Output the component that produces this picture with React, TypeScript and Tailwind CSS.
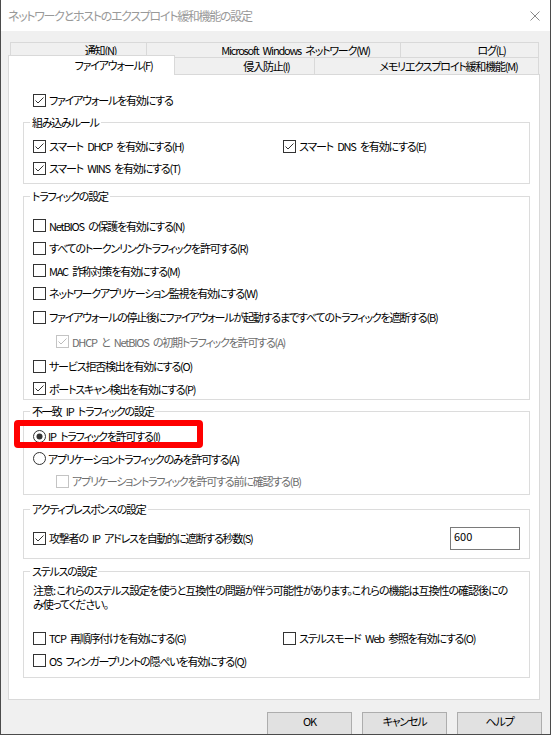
import type { ReactNode } from 'react';

const FONT = "font-['Noto_Sans_CJK_JP',sans-serif] [font-feature-settings:'palt'] [word-spacing:3px]";

function Box({ checked = false, disabled = false }: { checked?: boolean; disabled?: boolean }) {
  const stroke = disabled ? '#c4c4c4' : '#333333';
  return (
    <svg width="13" height="13" viewBox="0 0 13 13" className="shrink-0">
      <rect x="0.5" y="0.5" width="12" height="12" fill="#ffffff" stroke={stroke} />
      {checked && <path d="M2.5 6.5 L5 9 L10.5 3.5" fill="none" stroke={disabled ? '#bcbcbc' : '#333333'} />}
    </svg>
  );
}

function Radio({ selected = false }: { selected?: boolean }) {
  return (
    <svg width="13" height="13" viewBox="0 0 13 13" className="shrink-0">
      <circle cx="6.5" cy="6.5" r="6" fill="#ffffff" stroke="#333333" />
      {selected && <circle cx="6.5" cy="6.5" r="3" fill="#333333" />}
    </svg>
  );
}

function Check({ label, checked, disabled, className = '' }: { label: string; checked?: boolean; disabled?: boolean; className?: string }) {
  return (
    <div className={`flex items-center gap-[3px] whitespace-nowrap ${className}`}>
      <Box checked={checked} disabled={disabled} />
      <span className={disabled ? 'text-[#6d6d6d]' : 'text-black'}>{label}</span>
    </div>
  );
}

function Group({ title, className = '', children }: { title: string; className?: string; children: ReactNode }) {
  return (
    <fieldset className={`ml-[14px] w-[507px] border border-[#dcdcdc] px-[9px] ${className}`}>
      <legend className="-ml-[3px] px-[2px] leading-[14px]">{title}</legend>
      {children}
    </fieldset>
  );
}

function Tab({ label, className = '' }: { label: string; className?: string }) {
  return (
    <div className={`flex items-center justify-center whitespace-nowrap border border-b-0 border-[#d9d9d9] bg-[#f0f0f0] pl-[44px] ${className}`}>
      {label}
    </div>
  );
}

export default function App() {
  return (
    <div className={`flex h-[735px] w-[551px] flex-col overflow-hidden border-x border-b border-[#4b4b4b] bg-[#f0f0f0] text-[11px] leading-[14px] tracking-[-1.2px] text-black ${FONT}`}>
      {/* title bar */}
      <div className="flex h-[31px] shrink-0 items-center justify-between bg-white pl-[7px] pr-[10px]">
        <span className="text-[12px] tracking-[-1.3px] text-[#999999]">ネットワークとホストのエクスプロイト緩和機能の設定</span>
        <svg width="10" height="10" viewBox="0 0 10 10">
          <path d="M0.5 0.5 L9.5 9.5 M9.5 0.5 L0.5 9.5" stroke="#8a8a8a" strokeWidth="1" />
        </svg>
      </div>

      {/* tabs */}
      <div className="ml-[9px] mt-[11px] flex h-[16px]">
        <Tab label="通知(N)" className="w-[137px]" />
        <Tab label="Microsoft Windows ネットワーク(W)" className="-ml-px w-[255px]" />
        <Tab label="ログ(L)" className="-ml-px w-[139px]" />
      </div>
      <div className="ml-[7px] flex h-[17px] items-start">
        <div className="relative z-10 -mt-[2px] flex h-[20px] w-[167px] items-center justify-center whitespace-nowrap border border-b-0 border-[#d9d9d9] bg-white pb-[2px] pl-[44px]">
          ファイアウォール(F)
        </div>
        <Tab label="侵入防止(I)" className="-ml-px h-[17px] w-[141px]" />
        <Tab label="メモリエクスプロイト緩和機能(M)" className="-ml-px h-[17px] w-[225px]" />
      </div>

      {/* panel */}
      <div className="ml-[7px] h-[626px] w-[532px] shrink-0 border border-[#d9d9d9] bg-white pt-[15px]">
        <Check label="ファイアウォールを有効にする" checked className="ml-[24px] h-[20px]" />

        <Group title="組み込みルール" className="mt-[5px] pb-[4px] pt-[6px]">
          <div className="flex h-[22px] items-center">
            <Check label="スマート DHCP を有効にする(H)" checked className="w-[250px]" />
            <Check label="スマート DNS を有効にする(E)" checked />
          </div>
          <Check label="スマート WINS を有効にする(T)" checked className="h-[22px]" />
        </Group>

        <Group title="トラフィックの設定" className="mt-[5px] pt-[11px]">
          <Check label="NetBIOS の保護を有効にする(N)" className="h-[23px]" />
          <Check label="すべてのトークンリングトラフィックを許可する(R)" className="h-[22px]" />
          <Check label="MAC 詐称対策を有効にする(M)" className="h-[23px]" />
          <Check label="ネットワークアプリケーション監視を有効にする(W)" className="h-[22px]" />
          <Check label="ファイアウォールの停止後にファイアウォールが起動するまですべてのトラフィックを遮断する(B)" className="h-[26px]" />
          <Check label="DHCP と NetBIOS の初期トラフィックを許可する(A)" checked disabled className="ml-[23px] h-[23px]" />
          <Check label="サービス拒否検出を有効にする(O)" className="mt-[1px] h-[24px]" />
          <Check label="ポートスキャン検出を有効にする(P)" checked className="h-[21px]" />
        </Group>

        <Group title="不一致 IP トラフィックの設定" className="mt-[4px] pb-[2px] pt-[7px]">
          <div className="relative flex h-[22px] items-center gap-[2px]">
            <Radio selected />
            <span>IP トラフィックを許可する(I)</span>
            <div className="pointer-events-none absolute -left-[19px] -top-[5px] h-[28px] w-[189px] rounded-[4px] border-[6px] border-[#ff0000]" />
          </div>
          <div className="flex h-[23px] items-center gap-[2px]">
            <Radio />
            <span>アプリケーショントラフィックのみを許可する(A)</span>
          </div>
          <Check label="アプリケーショントラフィックを許可する前に確認する(B)" disabled className="ml-[23px] h-[22px]" />
        </Group>

        <Group title="アクティブレスポンスの設定" className="mt-[7px] pb-[7px] pt-[9px]">
          <div className="flex h-[26px] items-center justify-between">
            <Check label="攻撃者の IP アドレスを自動的に遮断する秒数(S)" checked />
            <div className="h-[23px] w-[70px] border border-[#7a7a7a] bg-white pl-[3px] pt-[1px] tracking-normal">600</div>
          </div>
        </Group>

        <Group title="ステルスの設定" className="mt-[5px] pb-[5px] pt-[5px]">
          <div className="whitespace-nowrap tracking-[-1px] [word-spacing:0px]">
            <div>注意: これらのステルス設定を使うと互換性の問題が伴う可能性があります。これらの機能は互換性の確認後にの</div>
            <div>み使ってください。</div>
          </div>
          <div className="mt-[16px] flex h-[22px] items-center">
            <Check label="TCP 再順序付けを有効にする(G)" className="w-[250px]" />
            <Check label="ステルスモード Web 参照を有効にする(O)" />
          </div>
          <Check label="OS フィンガープリントの隠ぺいを有効にする(Q)" className="h-[23px]" />
        </Group>
      </div>

      {/* buttons */}
      <div className="mt-[12px] flex justify-end gap-[10px] pr-[8px]">
        <button className="flex h-[23px] w-[85px] justify-center border border-[#adadad] bg-[#e1e1e1] pt-[1px]">OK</button>
        <button className="flex h-[23px] w-[85px] justify-center border border-[#adadad] bg-[#e1e1e1] pt-[1px]">キャンセル</button>
        <button className="flex h-[23px] w-[85px] justify-center border border-[#adadad] bg-[#e1e1e1] pt-[1px]">ヘルプ</button>
      </div>
    </div>
  );
}
